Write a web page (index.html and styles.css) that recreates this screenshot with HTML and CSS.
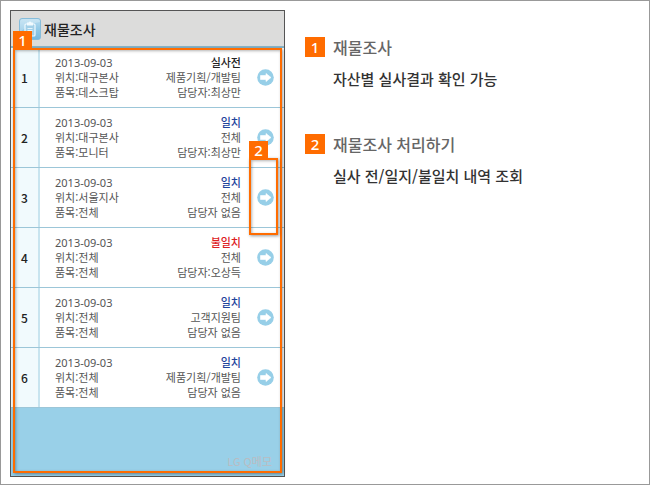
FILE: index.html
```
<!DOCTYPE html>
<html lang="ko">

<head>
    <meta charset="UTF-8">
    <meta name="viewport" content="width=device-width, initial-scale=1.0">
    <title>재물조사</title>
    <link rel="stylesheet" href="styles.css">
</head>

<body>
    <!-- Arrow icon shared by the rows -->
    <svg class="symbols" aria-hidden="true">
        <symbol id="arrow" viewBox="0 0 17 17">
            <circle cx="8.500" cy="8.500" r="8.300" fill="#97cfe8" />
            <path d="M3.500 6.500H9V4.500L14 8.500L9 12.500V10.500H3.500Z" fill="#fff" stroke="#fff" stroke-width=".6" stroke-linejoin="round" />
        </symbol>
    </svg>

    <div class="page">
        <section class="phone">
            <header class="phone-header">
                <svg class="app-icon" viewBox="0 0 22 22" aria-hidden="true">
                    <defs>
                        <linearGradient id="tile" x1="0" y1="0" x2="0" y2="1">
                            <stop offset="0" stop-color="#b9ddf0" />
                            <stop offset=".5" stop-color="#93cae7" />
                            <stop offset="1" stop-color="#74b9df" />
                        </linearGradient>
                    </defs>
                    <rect x=".5" y=".5" width="21" height="21" rx="2.500" fill="url(#tile)" stroke="#86bddb" />
                    <path d="M1 4Q1 1 4 1H18Q21 1 21 4Q12 5 1 14Z" fill="#fff" opacity=".25" />
                    <path d="M7 6H15Q16 6 16 7V17Q16 18 15 18H7Q6 18 6 17V7Q6 6 7 6Z" fill="#a3d0e8" stroke="#f1fafe" stroke-width="1.200" />
                    <path d="M8 4.500H9.500Q11 2.500 12.500 4.500H14V7.500H8Z" fill="#f1fafe" />
                    <path d="M8.500 10.500H13.500M8.500 12.500H13.500M8.500 14.500H12.500" stroke="#e4f4fb" />
                </svg>
                <h1 class="phone-title">재물조사</h1>
            </header>

            <ol class="list">
                <li class="row">
                    <span class="num">1</span>
                    <div class="info">
                        <span class="date">2013-09-03</span>
                        <span>위치:대구본사</span>
                        <span>품목:데스크탑</span>
                    </div>
                    <div class="state">
                        <strong class="status before">실사전</strong>
                        <span>제품기획/개발팀</span>
                        <span>담당자:최상만</span>
                    </div>
                    <button class="go" type="button" aria-label="1번 보기"><svg class="arrow"><use href="#arrow" /></svg></button>
                </li>
                <li class="row">
                    <span class="num">2</span>
                    <div class="info">
                        <span class="date">2013-09-03</span>
                        <span>위치:대구본사</span>
                        <span>품목:모니터</span>
                    </div>
                    <div class="state">
                        <strong class="status match">일치</strong>
                        <span>전체</span>
                        <span>담당자:최상만</span>
                    </div>
                    <button class="go" type="button" aria-label="2번 보기"><svg class="arrow"><use href="#arrow" /></svg></button>
                </li>
                <li class="row">
                    <span class="num">3</span>
                    <div class="info">
                        <span class="date">2013-09-03</span>
                        <span>위치:서울지사</span>
                        <span>품목:전체</span>
                    </div>
                    <div class="state">
                        <strong class="status match">일치</strong>
                        <span>전체</span>
                        <span>담당자 없음</span>
                    </div>
                    <button class="go" type="button" aria-label="3번 보기"><svg class="arrow"><use href="#arrow" /></svg></button>
                    <div class="marker marker-button"><span class="badge">2</span></div>
                </li>
                <li class="row">
                    <span class="num">4</span>
                    <div class="info">
                        <span class="date">2013-09-03</span>
                        <span>위치:전체</span>
                        <span>품목:전체</span>
                    </div>
                    <div class="state">
                        <strong class="status mismatch">불일치</strong>
                        <span>전체</span>
                        <span>담당자:오상득</span>
                    </div>
                    <button class="go" type="button" aria-label="4번 보기"><svg class="arrow"><use href="#arrow" /></svg></button>
                </li>
                <li class="row">
                    <span class="num">5</span>
                    <div class="info">
                        <span class="date">2013-09-03</span>
                        <span>위치:전체</span>
                        <span>품목:전체</span>
                    </div>
                    <div class="state">
                        <strong class="status match">일치</strong>
                        <span>고객지원팀</span>
                        <span>담당자 없음</span>
                    </div>
                    <button class="go" type="button" aria-label="5번 보기"><svg class="arrow"><use href="#arrow" /></svg></button>
                </li>
                <li class="row">
                    <span class="num">6</span>
                    <div class="info">
                        <span class="date">2013-09-03</span>
                        <span>위치:전체</span>
                        <span>품목:전체</span>
                    </div>
                    <div class="state">
                        <strong class="status match">일치</strong>
                        <span>제품기획/개발팀</span>
                        <span>담당자 없음</span>
                    </div>
                    <button class="go" type="button" aria-label="6번 보기"><svg class="arrow"><use href="#arrow" /></svg></button>
                </li>
            </ol>

            <p class="memo">LG Q메모</p>
            <div class="marker marker-list"><span class="badge">1</span></div>
        </section>

        <section class="notes">
            <article class="note">
                <span class="badge note-badge">1</span>
                <h2 class="note-title">재물조사</h2>
                <p class="note-text">자산별 실사결과 확인 가능</p>
            </article>
            <article class="note">
                <span class="badge note-badge">2</span>
                <h2 class="note-title">재물조사 처리하기</h2>
                <p class="note-text">실사 전/일지/불일치 내역 조회</p>
            </article>
        </section>
    </div>
</body>

</html>
```

FILE: styles.css
```
* {
    box-sizing: border-box;
}

body {
    margin: 0;
    background-color: #fff;
    color: #555;
    font-family: "Noto Sans CJK KR", sans-serif;
    font-size: 11px;
}

h1,
h2,
p,
ol {
    margin: 0;
    padding: 0;
}

.symbols {
    position: absolute;
    width: 0;
    height: 0;
}

.page {
    display: flex;
    gap: 20px;
    min-height: 100vh;
    padding: 9px 9px 7px;
    border: 1px solid #999;
}

/* Phone screen */
.phone {
    position: relative;
    display: flex;
    flex-direction: column;
    flex: 0 0 275px;
    border: 1px solid #555;
    background-color: #99d0e8;
}

.phone-header {
    display: flex;
    align-items: center;
    gap: 3px;
    height: 37px;
    padding-left: 8px;
    border-bottom: 2px solid #86b5c9;
    background-color: #dcdcdb;
}

.app-icon {
    width: 22px;
    height: 22px;
}

.phone-title {
    color: #222;
    font-size: 14px;
    font-weight: 500;
    line-height: 20px;
}

/* List rows */
.list {
    list-style: none;
}

.row {
    position: relative;
    display: flex;
    height: 60px;
    border-bottom: 1px solid #9cc6d8;
    background-color: #fff;
    line-height: 15px;
}

.num {
    display: flex;
    align-items: center;
    justify-content: center;
    width: 29px;
    border-right: 2px solid #c8e4ef;
    background-color: #f1fafd;
    color: #222;
    font-size: 12px;
    font-weight: 500;
}

.info,
.state {
    display: flex;
    flex-direction: column;
    justify-content: center;
}

.info {
    padding-left: 15px;
}

.date {
    font-family: "Noto Sans", sans-serif;
}

.state {
    flex: 1;
    text-align: right;
}

.status {
    font-weight: 500;
}

.before {
    color: #222;
}

.match {
    color: #1f459c;
}

.mismatch {
    color: #dd2023;
}

.go {
    display: flex;
    align-items: center;
    justify-content: center;
    width: 32px;
    margin-right: 3px;
    margin-left: 8px;
    padding: 0;
    border: none;
    background: none;
    cursor: pointer;
}

.arrow {
    width: 17px;
    height: 17px;
}

.memo {
    margin-top: auto;
    padding: 0 12px 7px 0;
    color: #b9bcc2;
    line-height: 15px;
    text-align: right;
}

/* Orange callouts over the screen */
.marker {
    position: absolute;
    border: 2px solid #ff6c00;
    box-shadow: 1px 1px 3px rgba(0, 0, 0, 0.4), inset 1px 1px 3px rgba(0, 0, 0, 0.3);
    pointer-events: none;
}

.marker-list {
    top: 37px;
    right: 2px;
    bottom: 3px;
    left: 2px;
}

.marker-button {
    top: -10px;
    right: 6px;
    bottom: -8px;
    width: 29px;
    z-index: 1;
}

.badge {
    display: flex;
    align-items: center;
    justify-content: center;
    width: 19px;
    height: 19px;
    background-color: #ff6c00;
    color: #fff;
    font-family: "Noto Sans", sans-serif;
    font-size: 15px;
    font-weight: 500;
    line-height: 19px;
}

.marker .badge {
    position: absolute;
    bottom: 100%;
    left: -2px;
}

/* Explanations */
.notes {
    display: flex;
    flex: 1;
    flex-direction: column;
    gap: 41px;
    padding-top: 25px;
}

.note {
    display: grid;
    grid-template-columns: 20px 1fr;
    gap: 8px;
    align-items: center;
    line-height: 24px;
}

.note-badge {
    width: 20px;
    height: 20px;
}

.note-title {
    color: #666;
    font-size: 16px;
    font-weight: 500;
}

.note-text {
    grid-column: 2;
    color: #333;
    font-size: 15px;
    font-weight: 500;
}
```
